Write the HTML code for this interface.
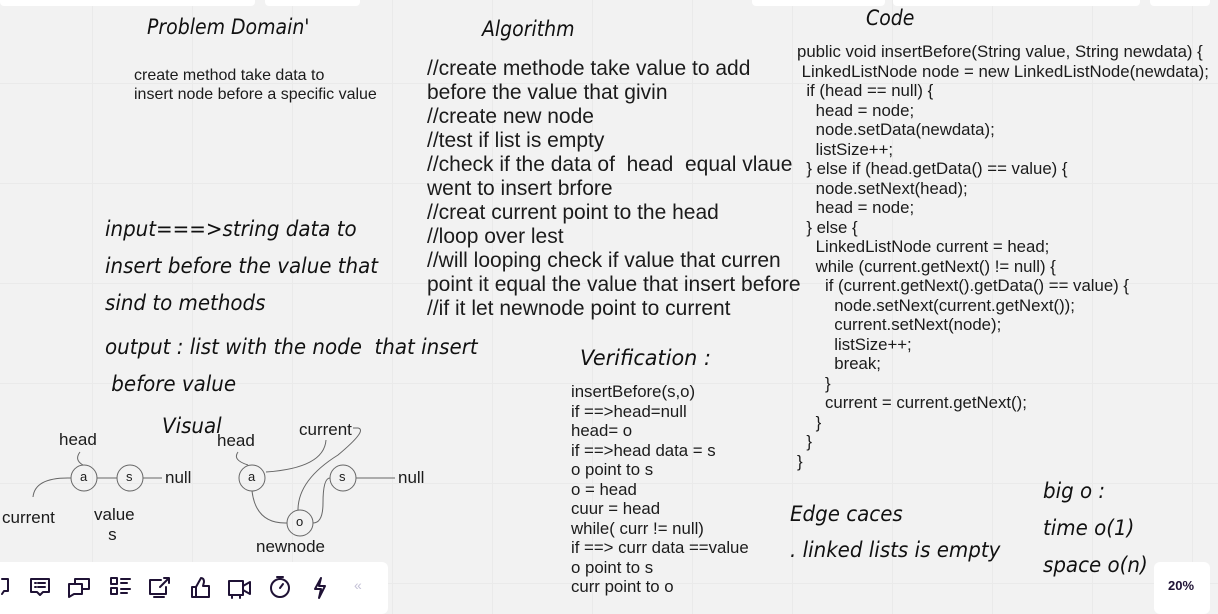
<!DOCTYPE html>
<html><head><meta charset="utf-8"><style>
*{margin:0;padding:0;box-sizing:border-box}
body{width:1218px;height:610px;overflow:hidden;position:relative;background:#f2f2f2;font-family:"Liberation Sans",sans-serif;color:#1b1b1b;
background-image:linear-gradient(to right,#eaeaea 1px,transparent 1px),linear-gradient(to bottom,#eaeaea 1px,transparent 1px);background-size:100px 100px;background-position:92px 83px}
.a{position:absolute;white-space:pre}
.h{position:absolute;white-space:pre;font-family:"DejaVu Sans Condensed","DejaVu Sans",sans-serif;font-style:italic;color:#111;transform-origin:0 0}
.code{font-size:16.8px;line-height:19.5px}
.alg{font-size:21px;line-height:24px}
.ver{font-size:16.8px;line-height:19.5px}
.box{position:absolute;background:#fff;border-radius:4px}
</style></head><body>
<div class="box" style="left:0;top:-4px;width:255px;height:10px"></div>
<div class="box" style="left:265px;top:-4px;width:95px;height:10px"></div>
<div class="box" style="left:752px;top:-4px;width:133px;height:10px"></div>
<div class="box" style="left:893px;top:-4px;width:247px;height:10px"></div>
<div class="box" style="left:1150px;top:-4px;width:60px;height:10px"></div>

<div class="h" style="left:147px;top:15px;font-size:21px">Problem Domain'</div>
<div class="h" style="left:482px;top:17px;font-size:21px">Algorithm</div>
<div class="h" style="left:866px;top:6px;font-size:21px">Code</div>

<div class="a" style="left:134px;top:66px;font-size:16px;line-height:19px">create method take data to
insert node before a specific value</div>

<div class="a alg" style="left:427px;top:57px">//create methode take value to add
before the value that givin
//create new node
//test if list is empty
//check if the data of  head  equal vlaue
went to insert brfore
//creat current point to the head
//loop over lest
//will looping check if value that curren
point it equal the value that insert before
//if it let newnode point to current</div>

<div class="a code" style="left:797px;top:42px">public void insertBefore(String value, String newdata) {
 LinkedListNode node = new LinkedListNode(newdata);
  if (head == null) {
    head = node;
    node.setData(newdata);
    listSize++;
  } else if (head.getData() == value) {
    node.setNext(head);
    head = node;
  } else {
    LinkedListNode current = head;
    while (current.getNext() != null) {
      if (current.getNext().getData() == value) {
        node.setNext(current.getNext());
        current.setNext(node);
        listSize++;
        break;
      }
      current = current.getNext();
    }
  }
}</div>

<div class="h" style="left:105px;top:211px;font-size:21px;line-height:37px;transform:scaleX(1.05)">input===>string data to
insert before the value that
sind to methods</div>
<div class="h" style="left:105px;top:329px;font-size:21px;line-height:37px;transform:scaleX(1.05)">output : list with the node  that insert
 before value</div>
<div class="h" style="left:162px;top:414px;font-size:21px;transform:scaleX(1.05)">Visual</div>
<div class="h" style="left:580px;top:346px;font-size:21px;transform:scaleX(1.1)">Verification :</div>
<div class="h" style="left:790px;top:496px;font-size:21px;line-height:36px;transform:scaleX(1.05)">Edge caces
. linked lists is empty</div>
<div class="h" style="left:1043px;top:473px;font-size:21px;line-height:37px;transform:scaleX(1.05)">big o :
time o(1)
space o(n)</div>

<div class="a ver" style="left:571px;top:382px">insertBefore(s,o)
if ==>head=null
head= o
if ==>head data = s
o point to s
o = head
cuur = head
while( curr != null)
if ==> curr data ==value
o point to s
curr point to o</div>

<svg style="position:absolute;left:0;top:410px" width="440" height="150" fill="none" stroke="#666" stroke-width="1">
<circle cx="84" cy="68" r="13"/><circle cx="130" cy="68" r="13"/>
<path d="M97 68H117M143 68H162M80 42q-6 8 3 13M33 87q2-20 38-19"/>
<circle cx="252" cy="68" r="13"/><circle cx="343" cy="68" r="13"/><circle cx="300" cy="113" r="13"/>
<path d="M356 68H395M238 42q-6 8 10 13M326 30q-2 28-60 32M252 81q4 33 35 32M313 113q10 0 10-20q0-25 7-25M298 100q0-30 40-55q30-25 20-27h-5"/>
</svg>
<div class="a" style="left:59px;top:430px;font-size:17px">head</div>
<div class="a" style="left:2px;top:508px;font-size:17px">current</div>
<div class="a" style="left:94px;top:505px;font-size:17px;line-height:20px">value
   s</div>
<div class="a" style="left:165px;top:468px;font-size:17px">null</div>
<div class="a" style="left:217px;top:431px;font-size:17px">head</div>
<div class="a" style="left:299px;top:420px;font-size:17px">current</div>
<div class="a" style="left:398px;top:468px;font-size:17px">null</div>
<div class="a" style="left:256px;top:537px;font-size:17px">newnode</div>
<div class="a" style="left:80px;top:469px;font-size:13px">a</div>
<div class="a" style="left:126px;top:469px;font-size:13px">s</div>
<div class="a" style="left:248px;top:469px;font-size:13px">a</div>
<div class="a" style="left:339px;top:469px;font-size:13px">s</div>
<div class="a" style="left:296px;top:514px;font-size:13px">o</div>

<div class="box" style="left:-6px;top:562px;width:394px;height:52px;border-radius:6px"></div>
<svg style="position:absolute;left:0;top:570px" width="380" height="34" fill="none" stroke="#1f1235" stroke-width="2" stroke-linejoin="round" stroke-linecap="round">
<path d="M2 9h6v12h-4l-2 3"/>
<path d="M31 9h18v13h-6l-3 3-3-3h-6zM35 13h1M38 13h7M35 17h1M38 17h7"/>
<path d="M69 14h13v10h-8l-5 3zM75 14v-5h14v10h-7"/>
<path d="M111 8h6v6h-6zM111 18h6v6h-6zM121 9h9M121 13h6M121 19h9M121 23h6"/>
<path d="M161 10h-11v14h16v-7M160 17l9-9M164 8h5v5M154 27h10"/>
<path d="M192 17h4v10h-4zM196 17l5-9q3 0 3 4l-1 4h6v11h-13"/>
<path d="M229 11h14v14h-14zM243 16l7-4v12l-7-4M232 25v3M240 25v3"/>
<circle cx="280" cy="18" r="9"/><path d="M280 18l3-4M277 7h6"/>
<path d="M321 8l-6 11h6l-2 9 6-12h-6l2-8z"/>
</svg>
<div class="a" style="left:354px;top:577px;font-size:14px;color:#c4c1d6">«</div>
<div class="box" style="left:1154px;top:562px;width:56px;height:52px;border-radius:6px"></div>
<div class="a" style="left:1168px;top:578px;font-size:13px;font-weight:bold;color:#1f1235">20%</div>
</body></html>
